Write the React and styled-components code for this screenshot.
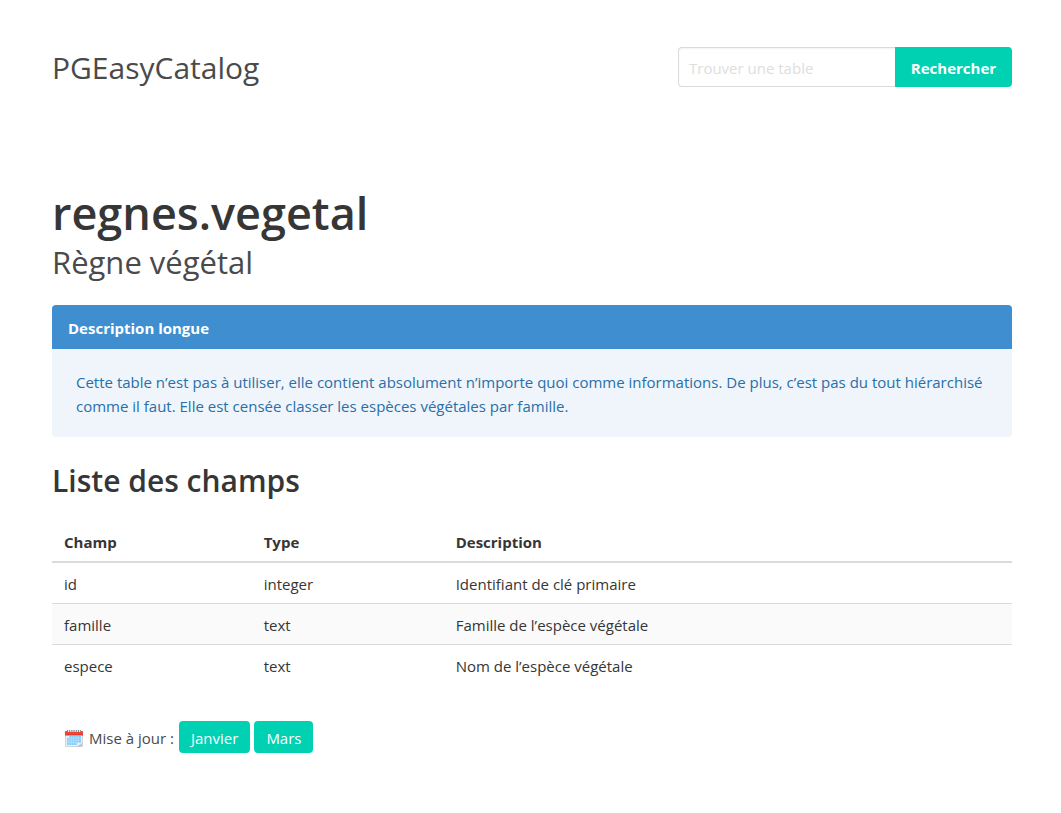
import React from "react";
import styled, { createGlobalStyle } from "styled-components";

const GlobalStyle = createGlobalStyle`
  *, *::before, *::after { box-sizing: border-box; }
  body {
    margin: 0;
    background: #fff;
    color: #4a4a4a;
    font-family: "Open Sans", "Noto Sans", sans-serif;
    font-size: 15px;
    line-height: 24px;
  }
  h1, h2, p { margin: 0; }
`;

const Page = styled.div`
  padding: 47px 49px 60px 52px;
`;

const Header = styled.header`
  display: flex;
  justify-content: space-between;
  align-items: center;
  gap: 24px;
  margin-bottom: 98px;
`;

const Brand = styled.p`
  padding-top: 2px;
  font-size: 30px;
  line-height: 38px;
`;

const Search = styled.form`
  display: flex;
`;

const SearchInput = styled.input`
  width: 217px;
  height: 40px;
  padding: 2px 10px 0;
  border: 1px solid #dbdbdb;
  border-right: 0;
  border-radius: 4px 0 0 4px;
  box-shadow: inset 0 1px 2px rgba(10, 10, 10, 0.05);
  background: #fff;
  color: #363636;
  font: inherit;
  &::placeholder { color: #dedede; opacity: 1; }
`;

const SearchButton = styled.button`
  width: 117px;
  height: 40px;
  padding: 2px 0 0;
  border: 0;
  border-radius: 0 4px 4px 0;
  background: #00d1b2;
  color: #fff;
  font: inherit;
  font-weight: 700;
  cursor: pointer;
`;

const Title = styled.h1`
  color: #363636;
  font-size: 45px;
  font-weight: 600;
  line-height: 56px;
`;

const Subtitle = styled.p`
  margin-bottom: 24px;
  padding-top: 2px;
  font-size: 31px;
  line-height: 38px;
`;

const Message = styled.article`
  margin-bottom: 24px;
  border-radius: 4px;
  overflow: hidden;
  background: #eff5fb;
  color: #296fa8;
`;

const MessageHeader = styled.div`
  padding: 11px 16px 9px;
  background: #3e8ed0;
  color: #fff;
  font-weight: 700;
`;

const MessageBody = styled.p`
  padding: 21px 24px 19px;
`;

const SectionTitle = styled.h2`
  margin-bottom: 20px;
  color: #363636;
  font-size: 30px;
  font-weight: 600;
  line-height: 40px;
`;

const Table = styled.table`
  width: 100%;
  border-collapse: collapse;
  table-layout: fixed;
  color: #363636;
  margin-bottom: 36px;
  th, td { padding: 9px 12px 7px; text-align: left; }
  th { border-bottom: 2px solid #dbdbdb; font-weight: 700; }
  td { border-bottom: 1px solid #dbdbdb; }
  tbody tr:last-child td { border-bottom: 0; }
  tbody tr:nth-child(even) { background: #fafafa; }
`;

const Col = styled.col`
  width: ${(p) => p.$width};
`;

const Updates = styled.footer`
  display: flex;
  align-items: center;
  gap: 4px;
  padding-left: 12px;
`;

const UpdatesLabel = styled.span`
  display: flex;
  align-items: center;
  gap: 5px;
  padding: 2px 1px 0 0;
`;

const MonthLink = styled.a`
  padding: 5px 12px 3px;
  border-radius: 4px;
  background: #00d1b2;
  color: #fff;
  text-decoration: none;
`;

const CalendarIcon = () => (
  <svg width="20" height="20" viewBox="0 0 20 20" aria-hidden="true">
    <path d="M1 7h18v11q0 1-1 1H2q-1 0-1-1z" fill="#cfd4d8" />
    <path d="M2 7h16v11H2z" fill="#e3f2fd" />
    <path d="M5 8h12v7H5zM3 10h3v7H3zM5 15h8v2H5z" fill="#82cdfb" />
    <path d="M3 10h14M3 12.3h14M3 14.6h14M5 8v9M7.3 8v9M9.6 8v9M12 8v9M14.3 8v7" stroke="#c0e5fb" strokeWidth=".6" />
    <path d="M13 18.5 18 15v3q0 1-1 1h-4z" fill="#c3c8cc" />
    <path d="M1 4q0-1 1-1h16q1 0 1 1v3H1z" fill="#f44336" />
    <path d="M1 6.5h18v1H1z" fill="#d9372f" />
    <path d="M3 3h14" stroke="#eceff1" strokeWidth="2" />
    <path d="M3 3h14" stroke="#77858d" strokeWidth="2" strokeDasharray="1 1.2" />
  </svg>
);

const fields = [
  { name: "id", type: "integer", description: "Identifiant de clé primaire" },
  { name: "famille", type: "text", description: "Famille de l’espèce végétale" },
  { name: "espece", type: "text", description: "Nom de l’espèce végétale" },
];

const months = ["Janvier", "Mars"];

export default function App() {
  return (
    <>
      <GlobalStyle />
      <Page>
        <Header>
          <Brand>PGEasyCatalog</Brand>
          <Search role="search" onSubmit={(e) => e.preventDefault()}>
            <SearchInput type="text" placeholder="Trouver une table" aria-label="Trouver une table" />
            <SearchButton type="submit">Rechercher</SearchButton>
          </Search>
        </Header>
        <main>
          <Title>regnes.vegetal</Title>
          <Subtitle>Règne végétal</Subtitle>
          <Message>
            <MessageHeader>Description longue</MessageHeader>
            <MessageBody>
              Cette table n’est pas à utiliser, elle contient absolument n’importe quoi comme informations. De plus,
              c’est pas du tout hiérarchisé comme il faut. Elle est censée classer les espèces végétales par famille.
            </MessageBody>
          </Message>
          <SectionTitle>Liste des champs</SectionTitle>
          <Table>
            <colgroup>
              <Col $width="20.8%" />
              <Col $width="20%" />
              <Col />
            </colgroup>
            <thead>
              <tr>
                <th scope="col">Champ</th>
                <th scope="col">Type</th>
                <th scope="col">Description</th>
              </tr>
            </thead>
            <tbody>
              {fields.map((f) => (
                <tr key={f.name}>
                  <td>{f.name}</td>
                  <td>{f.type}</td>
                  <td>{f.description}</td>
                </tr>
              ))}
            </tbody>
          </Table>
        </main>
        <Updates>
          <UpdatesLabel>
            <CalendarIcon />
            Mise à jour :
          </UpdatesLabel>
          {months.map((m) => (
            <MonthLink key={m} href="#">{m}</MonthLink>
          ))}
        </Updates>
      </Page>
    </>
  );
}
